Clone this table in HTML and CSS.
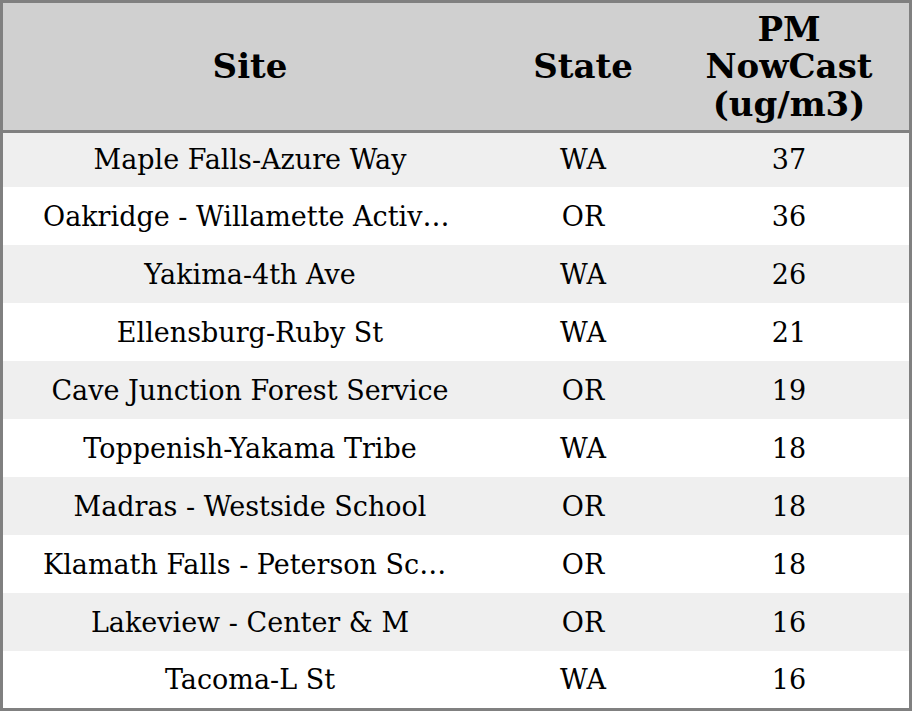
FILE: index.html
```html
<!DOCTYPE html>
<html>
<head>
<meta charset="utf-8">
<link rel="stylesheet" href="styles.css">
</head>
<body>
<div class="frame">
  <table class="grid">
    <colgroup>
      <col class="c-site">
      <col class="c-state">
      <col class="c-pm">
    </colgroup>
    <thead>
      <tr class="head">
        <th>Site</th>
        <th>State</th>
        <th>PM<br>NowCast<br>(ug/m3)</th>
      </tr>
    </thead>
    <tbody>
      <tr class="odd first"><td><span class="clip">Maple Falls-Azure Way</span></td><td>WA</td><td>37</td></tr>
      <tr><td><span class="clip">Oakridge - Willamette Activity Center</span></td><td>OR</td><td>36</td></tr>
      <tr class="odd"><td><span class="clip">Yakima-4th Ave</span></td><td>WA</td><td>26</td></tr>
      <tr><td><span class="clip">Ellensburg-Ruby St</span></td><td>WA</td><td>21</td></tr>
      <tr class="odd"><td><span class="clip">Cave Junction Forest Service</span></td><td>OR</td><td>19</td></tr>
      <tr><td><span class="clip">Toppenish-Yakama Tribe</span></td><td>WA</td><td>18</td></tr>
      <tr class="odd"><td><span class="clip">Madras - Westside School</span></td><td>OR</td><td>18</td></tr>
      <tr><td><span class="clip">Klamath Falls - Peterson School</span></td><td>OR</td><td>18</td></tr>
      <tr class="odd"><td><span class="clip">Lakeview - Center &amp; M</span></td><td>OR</td><td>16</td></tr>
      <tr class="last"><td><span class="clip">Tacoma-L St</span></td><td>WA</td><td>16</td></tr>
    </tbody>
  </table>
</div>
</body>
</html>
```
FILE: styles.css
```css
html, body {
  margin: 0;
  padding: 0;
  background: #ffffff;
}
.frame {
  width: 906px;
  height: 705px;
  border: 3px solid #808080;
  overflow: hidden;
}
.grid {
  width: 906px;
  border-collapse: collapse;
  table-layout: fixed;
  font-family: "DejaVu Serif", serif;
  color: #000;
}
.c-site { width: 494px; }
.c-state { width: 172px; }
.c-pm { width: 240px; }
.head {
  background: #d0d0d0;
  height: 128px;
}
.head th {
  font-size: 34px;
  font-weight: bold;
  line-height: 37.5px;
  padding: 1px 0 0 0;
  text-align: center;
  vertical-align: middle;
  border-bottom: 3px solid #808080;
}
tbody tr {
  height: 58px;
}
tbody tr.first { height: 56px; }
tbody tr.last { height: 57px; }
tbody tr.odd { background: #efefef; }
td {
  font-size: 27px;
  text-align: center;
  vertical-align: middle;
  padding: 0;
}
.clip {
  display: block;
  margin: 0 40px;
  white-space: nowrap;
  overflow: hidden;
  text-overflow: ellipsis;
}
```
